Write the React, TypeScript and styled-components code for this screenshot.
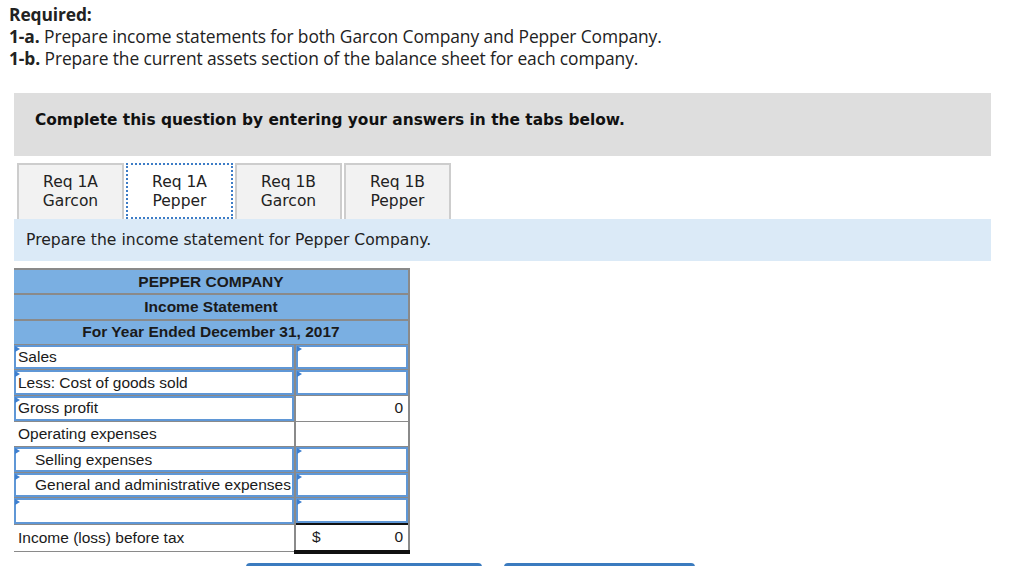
import React from "react";
import styled, { createGlobalStyle } from "styled-components";

const Global = createGlobalStyle`
  html, body { margin: 0; padding: 0; background: #fff; }
  body { width: 1024px; height: 566px; overflow: hidden; }
`;

const Page = styled.div`
  padding: 3px 0 0 14px;
`;

const Required = styled.div`
  font-family: "Open Sans", "Liberation Sans", sans-serif;
  font-size: 17.4px;
  line-height: 22px;
  letter-spacing: -0.1px;
  color: #222;
  margin-left: -5px;
  b { font-weight: 700; }
`;

const QuestionBox = styled.div`
  margin-top: 24px;
  width: 977px;
  height: 63px;
  box-sizing: border-box;
  background: #dedede;
  padding: 18px 0 0 21px;
  font-family: "DejaVu Sans", Verdana, sans-serif;
  font-weight: 700;
  font-size: 15.4px;
  line-height: 18px;
  color: #111;
`;

const TabRow = styled.div`
  margin-top: 7px;
  padding-left: 3px;
  display: flex;
  gap: 2px;
  height: 56px;
`;

const Tab = styled.div<{ $active?: boolean }>`
  width: 107px;
  height: 56px;
  box-sizing: border-box;
  text-align: center;
  font-family: "DejaVu Sans", Verdana, sans-serif;
  font-size: 15.5px;
  line-height: 19px;
  color: #222;
  padding-top: 8px;
  background: ${(p) => (p.$active ? "#fff" : "#f2f2f2")};
  border: 2px ${(p) => (p.$active ? "dotted #3d7cc6" : "solid #cdcdcd")};
  border-bottom: ${(p) => (p.$active ? "2px dotted #3d7cc6" : "none")};
`;

const Instruction = styled.div`
  width: 977px;
  height: 42px;
  box-sizing: border-box;
  background: #dbeaf7;
  display: flex;
  align-items: center;
  padding-left: 12px;
  font-family: "DejaVu Sans", Verdana, sans-serif;
  font-size: 15.6px;
  color: #222;
`;

const Sheet = styled.table`
  margin-top: 7px;
  width: 395px;
  border-collapse: collapse;
  table-layout: fixed;
  font-family: "Liberation Sans", Arial, sans-serif;
  font-size: 15.5px;
  line-height: 18px;
  color: #1a1a1a;
`;

const HeadCell = styled.td`
  height: 23.3px;
  padding: 0;
  background: #7aafe2;
  text-align: center;
  font-weight: 700;
  border-top: 2px solid #8a8a8a;
  border-right: 2px solid #8a8a8a;
  border-bottom: 1px solid #8a8a8a;
`;

const Cell = styled.td<{ $input?: boolean; $indent?: boolean; $total?: boolean; $num?: boolean }>`
  position: relative;
  height: 24.6px;
  padding: 0 ${(p) => (p.$num ? "5px" : "4px")} 0 ${(p) => (p.$indent ? "21px" : "4px")};
  text-align: ${(p) => (p.$num ? "right" : "left")};
  white-space: nowrap;
  background: #fff;
  border: 1px solid #8a8a8a;
  border-left: ${(p) => (p.$num ? "2px solid #8a8a8a" : "none")};
  border-right: ${(p) => (p.$num ? "2px solid #8a8a8a" : "1px solid #8a8a8a")};
  ${(p) =>
    p.$input
      ? `box-shadow: inset 0 0 0 2px #5f97d6;
         &::before {
           content: "";
           position: absolute;
           left: 1px;
           top: 1px;
           border-top: 3px solid transparent;
           border-bottom: 3px solid transparent;
           border-left: 5px solid #3d7fcf;
         }`
      : ""}
  ${(p) =>
    p.$total
      ? `border-top: 2px solid #111; border-bottom: 4px solid #111;`
      : ""}
`;

const Dollar = styled.span`
  position: absolute;
  left: 16px;
  top: 50%;
  transform: translateY(-50%);
`;

const ButtonRow = styled.div`
  margin-top: 9px;
  margin-left: 232px;
  display: flex;
  gap: 22px;
`;

const NavButton = styled.div<{ $w: number }>`
  width: ${(p) => p.$w}px;
  height: 4px;
  background: #3b7bbf;
  border-radius: 4px 4px 0 0;
`;

export default function App() {
  return (
    <>
      <Global />
      <Page>
        <Required>
          <div><b>Required:</b></div>
          <div><b>1-a.</b> Prepare income statements for both Garcon Company and Pepper Company.</div>
          <div><b>1-b.</b> Prepare the current assets section of the balance sheet for each company.</div>
        </Required>
        <QuestionBox>Complete this question by entering your answers in the tabs below.</QuestionBox>
        <TabRow>
          <Tab>Req 1A<br />Garcon</Tab>
          <Tab $active>Req 1A<br />Pepper</Tab>
          <Tab>Req 1B<br />Garcon</Tab>
          <Tab>Req 1B<br />Pepper</Tab>
        </TabRow>
        <Instruction>Prepare the income statement for Pepper Company.</Instruction>
        <Sheet>
          <colgroup>
            <col style={{ width: 281 }} />
            <col style={{ width: 114 }} />
          </colgroup>
          <tbody>
            <tr><HeadCell colSpan={2}>PEPPER COMPANY</HeadCell></tr>
            <tr><HeadCell colSpan={2}>Income Statement</HeadCell></tr>
            <tr><HeadCell colSpan={2}>For Year Ended December 31, 2017</HeadCell></tr>
            <tr><Cell $input>Sales</Cell><Cell $input $num></Cell></tr>
            <tr><Cell $input>Less: Cost of goods sold</Cell><Cell $input $num></Cell></tr>
            <tr><Cell $input>Gross profit</Cell><Cell $num>0</Cell></tr>
            <tr><Cell>Operating expenses</Cell><Cell $num></Cell></tr>
            <tr><Cell $input $indent>Selling expenses</Cell><Cell $input $num></Cell></tr>
            <tr><Cell $input $indent>General and administrative expenses</Cell><Cell $input $num></Cell></tr>
            <tr><Cell $input></Cell><Cell $input $num></Cell></tr>
            <tr><Cell>Income (loss) before tax</Cell><Cell $num $total><Dollar>$</Dollar>0</Cell></tr>
          </tbody>
        </Sheet>
        <ButtonRow>
          <NavButton $w={236} />
          <NavButton $w={191} />
        </ButtonRow>
      </Page>
    </>
  );
}
